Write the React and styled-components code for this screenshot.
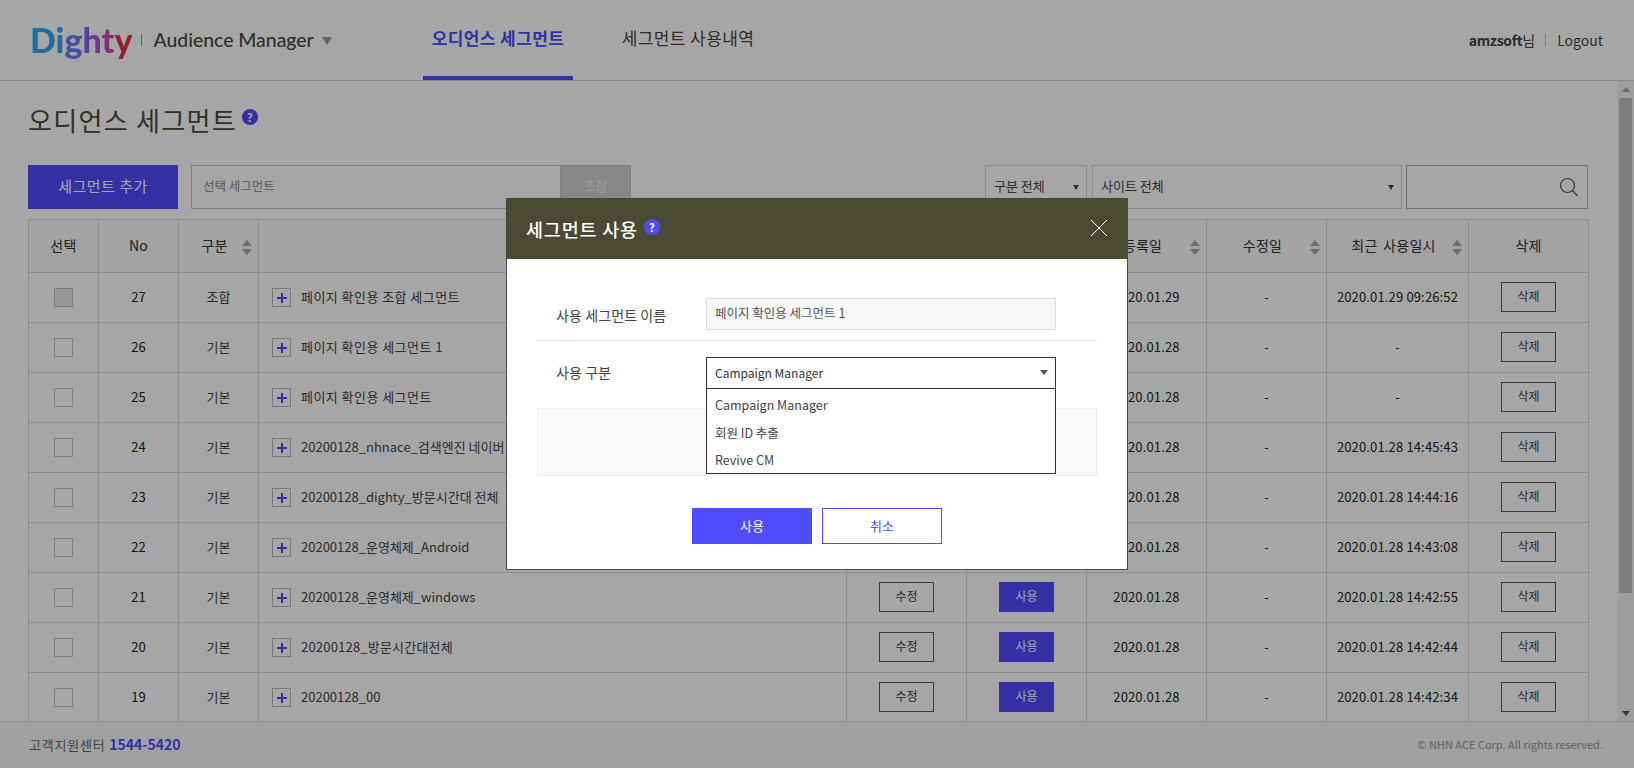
import React from "react";
import styled, { createGlobalStyle, css } from "styled-components";

const Global = createGlobalStyle`
  html, body { margin: 0; padding: 0; height: 100%; overflow: hidden; background: #fff; }
  body { font-family: "Noto Sans CJK KR", "Noto Sans", sans-serif; color: #444; font-size: 13px; }
  * { box-sizing: border-box; }
`;

const Page = styled.div`
  position: relative;
  width: 1634px;
  height: 768px;
  display: flex;
  flex-direction: column;
  overflow: hidden;
`;

const Header = styled.header`
  flex: 0 0 81px;
  display: flex;
  align-items: stretch;
  padding: 0 31px 0 30px;
  border-bottom: 1px solid #d7d7d7;
`;
const Brand = styled.div`
  width: 393px;
  display: flex;
  align-items: center;
`;
const Logo = styled.span`
  flex: 0 0 102px;
  font-family: Lato, sans-serif;
  font-weight: 900;
  font-size: 34px;
  line-height: 44px;
  background: linear-gradient(90deg, #2ab0f5 0%, #2aa8f0 26%, #6f7df5 40%, #8a62f0 56%, #c050c0 74%, #e8303f 90%);
  -webkit-background-clip: text;
  background-clip: text;
  color: transparent;
`;
const BrandSep = styled.i`
  width: 1px;
  height: 12px;
  background: #999;
  margin: 0 11px 0 9px;
`;
const Product = styled.span`
  font-family: Lato, sans-serif;
  font-size: 19.4px;
  font-weight: 500;
  color: #4a4a3c;
  width: 159px;
  white-space: nowrap;
  margin-bottom: 2px;
`;
const ProductCaret = styled.i`
  width: 0;
  height: 0;
  margin: 1px 0 0 10px;
  border-left: 5px solid transparent;
  border-right: 5px solid transparent;
  border-top: 8px solid #999;
`;
const Nav = styled.nav`
  display: flex;
  flex: 1;
`;
const Tab = styled.a`
  width: 150px;
  margin-right: ${p => (p.$active ? 40 : 0)}px;
  display: flex;
  align-items: center;
  justify-content: center;
  padding-bottom: 1px;
  font-size: 17px;
  letter-spacing: 0.4px;
  font-weight: ${p => (p.$active ? 700 : 400)};
  color: ${p => (p.$active ? "#4f4bff" : "#444")};
  border-bottom: 4px solid ${p => (p.$active ? "#4f4bff" : "transparent")};
  white-space: nowrap;
`;
const User = styled.div`
  display: flex;
  align-items: center;
  font-size: 14px;
  color: #444;
  padding-bottom: 1px;
  b { font-weight: 700; letter-spacing: -0.3px; }
`;
const UserSep = styled.i`
  width: 1px;
  height: 12px;
  background: #aab6c6;
  margin: 0 11px 0 10px;
`;

const Main = styled.main`
  flex: 1;
  min-height: 0;
  display: flex;
`;
const Content = styled.div`
  flex: 1;
  min-width: 0;
  overflow: hidden;
  padding: 0 29px 0 28px;
`;
const TitleRow = styled.div`
  height: 84px;
  display: flex;
  align-items: flex-start;
  padding-top: 19px;
`;
const Title = styled.h1`
  margin: 0;
  font-size: 26px;
  font-weight: 400;
  line-height: 40px;
  letter-spacing: 1.3px;
  color: #4a4a3c;
`;
const Help = styled.span`
  flex: none;
  width: 16px;
  height: 16px;
  border-radius: 50%;
  background: #4f4bff;
  color: #fff;
  font-size: 11px;
  font-weight: 700;
  line-height: 16px;
  text-align: center;
  margin: ${p => p.$margin || "9px 0 0 5px"};
`;
const Toolbar = styled.div`
  display: flex;
  justify-content: space-between;
  height: 44px;
  margin-bottom: 10px;
`;
const ToolGroup = styled.div`
  display: flex;
`;
const AddButton = styled.button`
  width: 150px;
  height: 44px;
  border: 0;
  padding: 0 0 4px;
  background: #4f4bff;
  color: #fff;
  font: 400 15px "Noto Sans CJK KR", sans-serif;
  letter-spacing: 0.5px;
  margin-right: 13px;
`;
const Combine = styled.div`
  width: 440px;
  height: 44px;
  display: flex;
  border: 1px solid #c4c4c4;
`;
const CombineField = styled.div`
  flex: 1;
  padding-left: 11px;
  line-height: 39px;
  font-size: 12.5px;
  color: #8a8a8a;
`;
const CombineButton = styled.button`
  width: 70px;
  border: 0;
  border-left: 1px solid #c4c4c4;
  padding: 0 0 3px;
  background: #d0d0d0;
  color: #eee;
  font: 400 13px "Noto Sans CJK KR", sans-serif;
`;
const Filter = styled.div`
  width: ${p => p.$w}px;
  height: 44px;
  margin-right: ${p => p.$gap}px;
  border: 1px solid #d7d7d7;
  padding: 0 7px 3px 8px;
  display: flex;
  align-items: center;
  justify-content: space-between;
  font-size: 13px;
  color: #444;
`;
const Caret = styled.i`
  width: 0;
  height: 0;
  margin-top: 3px;
  border-left: 3.5px solid transparent;
  border-right: 3.5px solid transparent;
  border-top: 5px solid #444;
`;
const SearchBox = styled.div`
  width: 182px;
  height: 44px;
  border: 1px solid #b0b0b0;
  display: flex;
  align-items: center;
  justify-content: flex-end;
  padding-right: 8px;
`;

const Table = styled.table`
  width: 1560px;
  table-layout: fixed;
  border-collapse: collapse;
  font-size: 13px;
`;
const Th = styled.th`
  height: 53px;
  padding: 0 ${p => (p.$sort ? 8 : 0)}px 2px 0;
  border: 1px solid #d7d7d7;
  background: #fafafa;
  font-weight: 400;
  font-size: 14px;
  word-spacing: 2px;
  letter-spacing: 0.3px;
  color: #333;
  position: relative;
`;
const Td = styled.td`
  height: 50px;
  padding: 0 0 2px;
  border: 1px solid #d7d7d7;
  text-align: center;
  letter-spacing: ${p => (p.$dark ? 0.15 : 0)}px;
  color: ${p => (p.$dark ? "#222" : "#444")};
`;
const Sort = styled.span`
  position: absolute;
  right: 6px;
  top: 20px;
  display: flex;
  flex-direction: column;
  gap: 3px;
  &::before, &::after {
    content: "";
    border-left: 5px solid transparent;
    border-right: 5px solid transparent;
  }
  &::before { border-bottom: 6px solid #aaa; }
  &::after { border-top: 6px solid #aaa; }
`;
const Check = styled.span`
  display: block;
  width: 19px;
  height: 19px;
  margin: 2px auto 0;
  border: 1px solid #c4c4c4;
  background: ${p => (p.$on ? "#e8e8e8" : "transparent")};
`;
const NameCell = styled.div`
  display: flex;
  align-items: center;
  padding-left: 13px;
  letter-spacing: ${p => p.$spacing}px;
  white-space: nowrap;
  overflow: hidden;
`;
const Plus = styled.span`
  flex: none;
  width: 19px;
  height: 19px;
  margin: 2px 10px 0 0;
  border: 1px solid #bbb;
  position: relative;
  &::before {
    content: "";
    position: absolute;
    left: 3.5px; top: 8px;
    width: 10px; height: 2px;
    background: #4f4bff;
  }
  &::after {
    content: "";
    position: absolute;
    left: 7.5px; top: 4px;
    width: 2px; height: 10px;
    background: #4f4bff;
  }
`;
const RowButton = styled.button`
  display: block;
  width: 55px;
  height: 30px;
  margin: 0 auto;
  padding: 0 0 2px;
  font: 400 12px "Noto Sans CJK KR", sans-serif;
  ${p => p.$primary
    ? css`border: 0; background: #4f4bff; color: #fff;`
    : css`border: 1px solid #5c5c48; background: #fff; color: #444;`}
`;

const Scrollbar = styled.aside`
  flex: 0 0 17px;
  background: #f1f1f1;
  display: flex;
  flex-direction: column;
  align-items: center;
  padding: 6px 2px 5px;
`;
const ScrollArrow = styled.i`
  flex: none;
  width: 0;
  height: 0;
  border-left: 4px solid transparent;
  border-right: 4px solid transparent;
  ${p => p.$up ? css`border-bottom: 5px solid #a3a3a3;` : css`border-top: 5px solid #505050;`}
`;
const ScrollThumb = styled.div`
  flex: none;
  width: 13px;
  height: 495px;
  margin: 6px 0 auto;
  background: #c1c1c1;
`;

const Footer = styled.footer`
  flex: 0 0 47px;
  display: flex;
  align-items: center;
  justify-content: space-between;
  padding: 0 31px 2px 29px;
  background: #f6f6f6;
  border-top: 1px solid #d7d7d7;
`;
const Support = styled.div`
  font-size: 13px;
  letter-spacing: 0.8px;
  color: #666;
  b { font-size: 14px; font-weight: 700; color: #4f4bff; letter-spacing: 0; }
`;
const Copy = styled.div`
  font-size: 11px;
  color: #999;
`;

const Dim = styled.div`
  position: absolute;
  inset: 0;
  background: rgba(0, 0, 0, 0.35);
`;
const Modal = styled.div`
  position: absolute;
  left: 506px;
  top: 198px;
  width: 622px;
  height: 372px;
  background: #fff;
  border: 1px solid #4a4a44;
  border-top: 0;
`;
const ModalHead = styled.div`
  height: 61px;
  margin: 0 -1px;
  background: #4a4933;
  display: flex;
  align-items: center;
  padding: 0 20px;
  position: relative;
`;
const ModalTitle = styled.h2`
  margin: 0;
  font-size: 18.5px;
  font-weight: 500;
  line-height: 24px;
  letter-spacing: 0.8px;
  color: #fff;
`;
const Close = styled.svg`
  position: absolute;
  right: 20px;
  top: 21px;
`;
const ModalBody = styled.div`
  padding: 39px 30px 0;
`;
const FormRow = styled.div`
  display: flex;
  padding: ${p => p.$pad};
  padding-left: 19px;
  border-bottom: ${p => (p.$line ? "1px solid #e6e6e6" : "0")};
`;
const Label = styled.label`
  width: 150px;
  height: 32px;
  font-size: 14px;
  color: #444;
  line-height: 34px;
  letter-spacing: 0.1px;
  margin-top: ${p => p.$top || 0}px;
`;
const ReadField = styled.div`
  width: 350px;
  height: 32px;
  padding-left: 8px;
  border: 1px solid #ddd;
  background: #f7f7f7;
  font-size: 12.5px;
  line-height: 28px;
  color: #555;
`;
const SelectWrap = styled.div`
  width: 350px;
  height: 32px;
  position: relative;
`;
const SelectBox = styled.div`
  height: 32px;
  padding: 0 7px 1px 8px;
  border: 1px solid #333;
  display: flex;
  align-items: center;
  justify-content: space-between;
  font-size: 12px;
  color: #333;
`;
const SelectCaret = styled.i`
  width: 0;
  height: 0;
  border-left: 4px solid transparent;
  border-right: 4px solid transparent;
  border-top: 5px solid #555;
`;
const Options = styled.ul`
  position: absolute;
  left: 0;
  top: 32px;
  width: 350px;
  height: 85px;
  margin: 0;
  padding: 2px 0 0;
  list-style: none;
  background: #fff;
  border: 1px solid #333;
  border-top: 0;
`;
const Option = styled.li`
  height: 27.5px;
  line-height: 27px;
  padding-left: 8px;
  font-size: 12.5px;
  color: #444;
`;
const GrayBox = styled.div`
  height: 68px;
  margin-top: 19px;
  background: #f9f9f9;
  border: 1px solid #eee;
`;
const ModalActions = styled.div`
  display: flex;
  justify-content: center;
  gap: 10px;
  margin-top: 32px;
`;
const ModalButton = styled.button`
  width: 120px;
  height: 36px;
  padding: 0 0 1px;
  font: 400 13px "Noto Sans CJK KR", sans-serif;
  border: 1px solid #4f4bff;
  background: ${p => (p.$primary ? "#4f4bff" : "#fff")};
  color: ${p => (p.$primary ? "#fff" : "#4f4bff")};
`;

const rows = [
  { no: 27, kind: "조합", name: "페이지 확인용 조합 세그먼트", reg: "2020.01.29", used: "2020.01.29 09:26:52", on: true, ls: 0.45 },
  { no: 26, kind: "기본", name: "페이지 확인용 세그먼트 1", reg: "2020.01.28", used: "-", ls: 0.45 },
  { no: 25, kind: "기본", name: "페이지 확인용 세그먼트", reg: "2020.01.28", used: "-", ls: 0.45 },
  { no: 24, kind: "기본", name: "20200128_nhnace_검색엔진 네이버", reg: "2020.01.28", used: "2020.01.28 14:45:43", ls: 0 },
  { no: 23, kind: "기본", name: "20200128_dighty_방문시간대 전체", reg: "2020.01.28", used: "2020.01.28 14:44:16", ls: 0 },
  { no: 22, kind: "기본", name: "20200128_운영체제_Android", reg: "2020.01.28", used: "2020.01.28 14:43:08", ls: 0 },
  { no: 21, kind: "기본", name: "20200128_운영체제_windows", reg: "2020.01.28", used: "2020.01.28 14:42:55", ls: 0 },
  { no: 20, kind: "기본", name: "20200128_방문시간대전체", reg: "2020.01.28", used: "2020.01.28 14:42:44", ls: 0.2 },
  { no: 19, kind: "기본", name: "20200128_00", reg: "2020.01.28", used: "2020.01.28 14:42:34", ls: 0 },
];
const widths = [70, 80, 80, 588, 120, 120, 120, 120, 142, 120];
const heads = [
  ["선택"], ["No"], ["구분", true], [""], ["수정"], ["사용"],
  ["등록일", true], ["수정일", true], ["최근 사용일시", true], ["삭제"],
];

export default function App() {
  return (
    <Page>
      <Global />
      <Header>
        <Brand>
          <Logo>Dighty</Logo>
          <BrandSep />
          <Product>Audience Manager</Product>
          <ProductCaret />
        </Brand>
        <Nav>
          <Tab $active>오디언스 세그먼트</Tab>
          <Tab>세그먼트 사용내역</Tab>
        </Nav>
        <User>
          <b>amzsoft</b>님<UserSep />Logout
        </User>
      </Header>
      <Main>
        <Content>
          <TitleRow>
            <Title>오디언스 세그먼트</Title>
            <Help>?</Help>
          </TitleRow>
          <Toolbar>
            <ToolGroup>
              <AddButton>세그먼트 추가</AddButton>
              <Combine>
                <CombineField>선택 세그먼트</CombineField>
                <CombineButton>조합</CombineButton>
              </Combine>
            </ToolGroup>
            <ToolGroup>
              <Filter $w={102} $gap={5}>구분 전체<Caret /></Filter>
              <Filter $w={310} $gap={4}>사이트 전체<Caret /></Filter>
              <SearchBox>
                <svg width="20" height="20" viewBox="0 0 20 20" fill="none" stroke="#555" strokeWidth="1.2">
                  <circle cx="8.5" cy="8.5" r="7" />
                  <path d="M13.5 13.5 L18.5 19" />
                </svg>
              </SearchBox>
            </ToolGroup>
          </Toolbar>
          <Table>
            <colgroup>
              {widths.map((w, i) => <col key={i} style={{ width: w }} />)}
            </colgroup>
            <thead>
              <tr>
                {heads.map(([t, s], i) => (
                  <Th key={i} $sort={s}>{t}{s && <Sort />}</Th>
                ))}
              </tr>
            </thead>
            <tbody>
              {rows.map(r => (
                <tr key={r.no}>
                  <Td><Check $on={r.on} /></Td>
                  <Td $dark>{r.no}</Td>
                  <Td>{r.kind}</Td>
                  <Td><NameCell $spacing={r.ls}><Plus />{r.name}</NameCell></Td>
                  <Td><RowButton>수정</RowButton></Td>
                  <Td><RowButton $primary>사용</RowButton></Td>
                  <Td $dark>{r.reg}</Td>
                  <Td $dark>-</Td>
                  <Td $dark>{r.used}</Td>
                  <Td><RowButton>삭제</RowButton></Td>
                </tr>
              ))}
            </tbody>
          </Table>
        </Content>
        <Scrollbar>
          <ScrollArrow $up />
          <ScrollThumb />
          <ScrollArrow />
        </Scrollbar>
      </Main>
      <Footer>
        <Support>고객지원센터 <b>1544-5420</b></Support>
        <Copy>© NHN ACE Corp. All rights reserved.</Copy>
      </Footer>
      <Dim />
      <Modal>
        <ModalHead>
          <ModalTitle>세그먼트 사용</ModalTitle>
          <Help $margin="-4px 0 0 6px">?</Help>
          <Close width="18" height="18" viewBox="0 0 18 18" stroke="#fff" strokeWidth="1" fill="none">
            <path d="M1 1 L17 17 M17 1 L1 17" />
          </Close>
        </ModalHead>
        <ModalBody>
          <FormRow $pad="0 0 10px" $line>
            <Label>사용 세그먼트 이름</Label>
            <ReadField>페이지 확인용 세그먼트 1</ReadField>
          </FormRow>
          <FormRow $pad="16px 0 0">
            <Label $top={-2}>사용 구분</Label>
            <SelectWrap>
              <SelectBox>Campaign Manager<SelectCaret /></SelectBox>
              <Options>
                <Option>Campaign Manager</Option>
                <Option>회원 ID 추출</Option>
                <Option>Revive CM</Option>
              </Options>
            </SelectWrap>
          </FormRow>
          <GrayBox />
          <ModalActions>
            <ModalButton $primary>사용</ModalButton>
            <ModalButton>취소</ModalButton>
          </ModalActions>
        </ModalBody>
      </Modal>
    </Page>
  );
}
